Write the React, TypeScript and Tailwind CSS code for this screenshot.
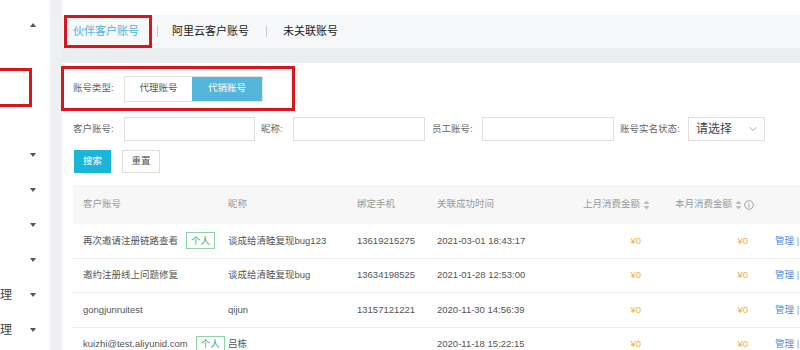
import { ChevronDown } from 'lucide-react';

const rows = [
  { acct: '再次邀请注册链路查看', tag: true, nick: '谈成给清睦复现bug123', phone: '13619215275', time: '2021-03-01 18:43:17' },
  { acct: '邀约注册线上问题修复', tag: false, nick: '谈成给清睦复现bug', phone: '13634198525', time: '2021-01-28 12:53:00' },
  { acct: 'gongjunruitest', tag: false, nick: 'qijun', phone: '13157121221', time: '2020-11-30 14:56:39' },
  { acct: 'kuizhi@test.aliyunid.com', tag: true, nick: '吕栋', phone: '', time: '2020-11-18 15:22:15' },
];

const Caret = ({ up }: { up?: boolean }) => (
  <svg width="6" height="4" viewBox="0 0 6 4">
    <path d={up ? 'M0 4 L3 0 L6 4 Z' : 'M0 0 L6 0 L3 4 Z'} fill="#555" />
  </svg>
);

const SortIcon = () => (
  <svg width="7" height="10" viewBox="0 0 7 10" className="ml-[3px]">
    <path d="M0.5 4 L3.5 0.5 L6.5 4 Z" fill="#bbb" />
    <path d="M0.5 6 L3.5 9.5 L6.5 6 Z" fill="#bbb" />
  </svg>
);

const InfoIcon = () => (
  <svg width="10" height="10" viewBox="0 0 10 10" className="ml-[2px]">
    <circle cx="5" cy="5" r="4.3" fill="none" stroke="#999" strokeWidth="0.9" />
    <circle cx="5" cy="3" r="0.6" fill="#999" />
    <path d="M5 4.3 V7.6" stroke="#999" strokeWidth="0.9" />
  </svg>
);

const Tag = () => (
  <span className="ml-[8px] inline-flex h-[17px] items-center border border-[#8fd3a8] px-[4px] text-[9.5px] text-[#3aa96b]">个人</span>
);

export default function App() {
  const side = [false, false, false, false, true, true];
  return (
    <div className="flex h-[350px] w-[800px] overflow-hidden bg-white font-['Liberation_Sans','Noto_Sans_CJK_SC',sans-serif] text-[9.5px] text-[#666]">
      {/* sidebar */}
      <div className="flex w-[50px] shrink-0 flex-col pt-[7px]">
        <div className="flex h-[35px] shrink-0 items-center justify-end pr-[14px]"><Caret up /></div>
        <div className="h-[95px] shrink-0 pt-[26px]">
          <div className="ml-[-4px] h-[39px] w-[36px] border-[3px] border-[#d8161d]" />
        </div>
        {side.map((t, i) => (
          <div key={i} className="flex h-[35px] shrink-0 items-center justify-between pr-[14px]">
            <span className="text-[12px] text-[#444]">{t ? '理' : ''}</span>
            <Caret />
          </div>
        ))}
      </div>
      <div className="w-[12px] shrink-0 bg-[#eef0f3]" />

      {/* main */}
      <div className="flex min-w-0 flex-1 flex-col">
        <div className="h-[15px] shrink-0 bg-white" />
        <div className="flex h-[33px] shrink-0 items-center bg-[#f7f8f9] text-[11px]">
          <div className="ml-[2px] flex h-full w-[88px] items-center border-[3px] border-[#d8161d] pl-[6px] text-[#4fb4dc]">伙伴客户账号</div>
          <span className="ml-[5px] h-[11px] w-px bg-[#ccc]" />
          <span className="ml-[14px] text-[#222]">阿里云客户账号</span>
          <span className="ml-[17px] h-[11px] w-px bg-[#ccc]" />
          <span className="ml-[16px] text-[#222]">未关联账号</span>
        </div>
        <div className="h-[15px] shrink-0 bg-[#ebeef1]" />

        <div className="flex shrink-0 flex-col pl-[11px]">
          {/* account type */}
          <div className="ml-[-12px] mt-[3px] flex h-[45px] w-[234px] shrink-0 items-center border-[3px] border-[#d8161d] pl-[9px]">
            <span className="w-[51px]">账号类型:</span>
            <div className="flex h-[26px] border border-[#e3e3e3]">
              <span className="flex w-[67px] items-center justify-center bg-white text-[#555]">代理账号</span>
              <span className="flex w-[70px] items-center justify-center bg-[#55b6dc] text-white">代销账号</span>
            </div>
          </div>

          {/* filters */}
          <div className="mt-[6px] flex h-[24px] shrink-0 items-center">
            <span className="w-[51px]">客户账号:</span>
            <div className="h-full w-[131px] border border-[#dedede]" />
            <span className="ml-[6px] w-[32px]">昵称:</span>
            <div className="h-full w-[132px] border border-[#dedede]" />
            <span className="ml-[7px] w-[50px]">员工账号:</span>
            <div className="h-full w-[132px] border border-[#dedede]" />
            <span className="ml-[6px] w-[68px]">账号实名状态:</span>
            <div className="flex h-full w-[77px] items-center justify-between border border-[#dedede] pl-[7px] pr-[5px]">
              <span className="text-[12px] text-[#444]">请选择</span>
              <ChevronDown size={12} strokeWidth={1.5} className="text-[#888]" />
            </div>
          </div>

          {/* buttons */}
          <div className="mt-[9px] flex h-[23px] shrink-0 gap-[11px] pl-px">
            <button className="w-[37px] bg-[#1cb5da] text-white">搜索</button>
            <button className="w-[38px] border border-[#ddd] bg-white text-[#555]">重置</button>
          </div>

          {/* table */}
          <div className="mt-[12px] w-[760px] shrink-0">
            <div className="grid h-[39px] grid-cols-[145px_129px_80px_138px_86px_107px_1fr] items-center bg-[#f7f7f7] text-[#999]">
              <span className="px-[10px]">客户账号</span>
              <span className="px-[10px]">昵称</span>
              <span className="px-[10px]">绑定手机</span>
              <span className="px-[10px]">关联成功时间</span>
              <span className="flex items-center justify-end pr-[1px]">上月消费金额<SortIcon /></span>
              <span className="flex items-center justify-end pr-[4px]">本月消费金额<SortIcon /><InfoIcon /></span>
              <span />
            </div>
            {rows.map((r) => (
              <div key={r.time} className="grid h-[34.5px] grid-cols-[145px_129px_80px_138px_86px_107px_1fr] items-center border-b border-[#eee] text-[#555]">
                <span className="flex items-center whitespace-nowrap px-[10px]">{r.acct}{r.tag && <Tag />}</span>
                <span className="px-[10px]">{r.nick}</span>
                <span className="px-[10px]">{r.phone}</span>
                <span className="px-[10px]">{r.time}</span>
                <span className="pr-[10px] text-right text-[#f3ad3e]">¥0</span>
                <span className="pr-[10px] text-right text-[#f3ad3e]">¥0</span>
                <span className="whitespace-nowrap pl-[17px] text-[#4b8fdc]">管理 <span className="text-[#999]">|</span></span>
              </div>
            ))}
          </div>
        </div>
      </div>
    </div>
  );
}
